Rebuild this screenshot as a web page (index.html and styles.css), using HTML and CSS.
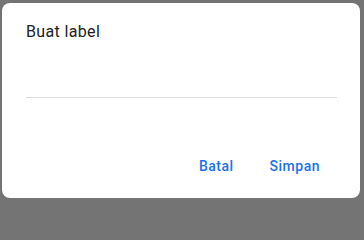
FILE: index.html
```html
<!DOCTYPE html>
<html lang="id">
<head>
<meta charset="utf-8">
<title>Buat label</title>
<link rel="stylesheet" href="styles.css">
</head>
<body>
<div class="dialog">
  <h2 class="title">Buat label</h2>
  <div class="field"><input class="input" type="text" aria-label="Nama label"></div>
  <div class="actions">
    <button class="btn">Batal</button>
    <button class="btn">Simpan</button>
  </div>
</div>
</body>
</html>
```
FILE: styles.css
```css
html, body {
  margin: 0;
  padding: 0;
}
body {
  background: #747474;
  width: 364px;
  height: 200px;
  overflow: hidden;
  font-family: Roboto, "Open Sans", Arial, sans-serif;
}
.dialog {
  margin: 3px 0 0 2px;
  width: 358px;
  height: 195px;
  background: #fff;
  border-radius: 8px;
  box-sizing: border-box;
  padding: 18px 24px 0 24px;
  display: flex;
  flex-direction: column;
}
.title {
  margin: 0;
  font-size: 16px;
  line-height: 22px;
  font-weight: 400;
  color: #202124;
  letter-spacing: 0.35px;
}
.field {
  margin-top: 14px;
  border-bottom: 1px solid #dadce0;
  margin-right: -1px;
}
.input {
  display: block;
  width: 100%;
  height: 40px;
  border: 0;
  outline: none;
  padding: 0;
  font: inherit;
  background: transparent;
}
.actions {
  display: flex;
  justify-content: flex-end;
  gap: 4px;
  margin-top: 50px;
  margin-right: 0;
}
.btn {
  border: 0;
  background: transparent;
  color: #1a73e8;
  font-family: Roboto, Arial, sans-serif;
  font-size: 14px;
  font-weight: 500;
  letter-spacing: 0.5px;
  padding: 0 16px;
  height: 36px;
  line-height: 36px;
  border-radius: 4px;
}
```
